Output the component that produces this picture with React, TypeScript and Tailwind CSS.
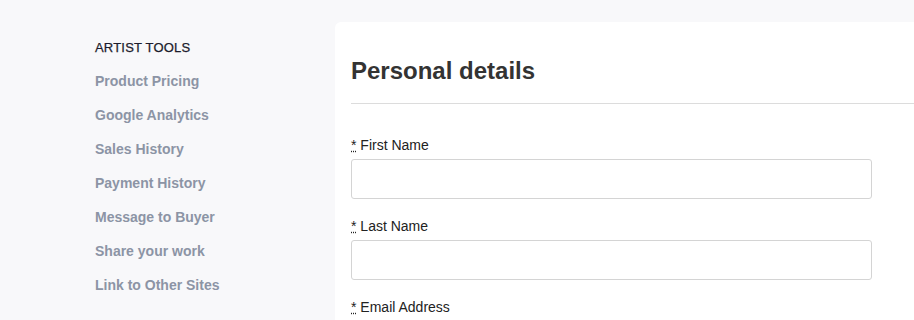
const links = [
  'Product Pricing',
  'Google Analytics',
  'Sales History',
  'Payment History',
  'Message to Buyer',
  'Share your work',
  'Link to Other Sites',
];

const fields = ['First Name', 'Last Name', 'Email Address'];

function Field({ label }: { label: string }) {
  return (
    <div className="mb-[17px]">
      <label className="mb-1 block text-sm leading-5 text-[#222]">
        <abbr title="required" className="underline decoration-dotted">
          *
        </abbr>{' '}
        {label}
      </label>
      <input
        type="text"
        className="block h-10 w-[521px] rounded-[3px] border border-[#d4d4d4] bg-white px-3 text-sm outline-none"
      />
    </div>
  );
}

export default function App() {
  return (
    <div className="flex h-[320px] w-full overflow-hidden bg-[#f8f8fa] font-['Liberation_Sans',Arial,sans-serif]">
      <aside className="w-[335px] shrink-0 pl-[95px] pt-[38px]">
        <h3 className="mb-[13px] text-[13px] leading-5 uppercase tracking-[0.2px] text-[#1c1c2c] [-webkit-text-stroke:0.25px_#1c1c2c]">
          Artist Tools
        </h3>
        <ul className="flex flex-col gap-[14px]">
          {links.map((l) => (
            <li key={l} className="leading-5">
              <a href="#" className="block text-sm leading-5 font-bold text-[#8c94a5]">
                {l}
              </a>
            </li>
          ))}
        </ul>
      </aside>
      <main className="mt-[22px] min-w-0 flex-1 rounded-tl-md bg-white pl-4">
        <h2 className="border-b border-[#dcdcdc] pt-[34px] pb-[18px] text-2xl leading-[29px] font-bold text-[#333]">
          Personal details
        </h2>
        <form className="pt-[31px]">
          {fields.map((f) => (
            <Field key={f} label={f} />
          ))}
        </form>
      </main>
    </div>
  );
}
